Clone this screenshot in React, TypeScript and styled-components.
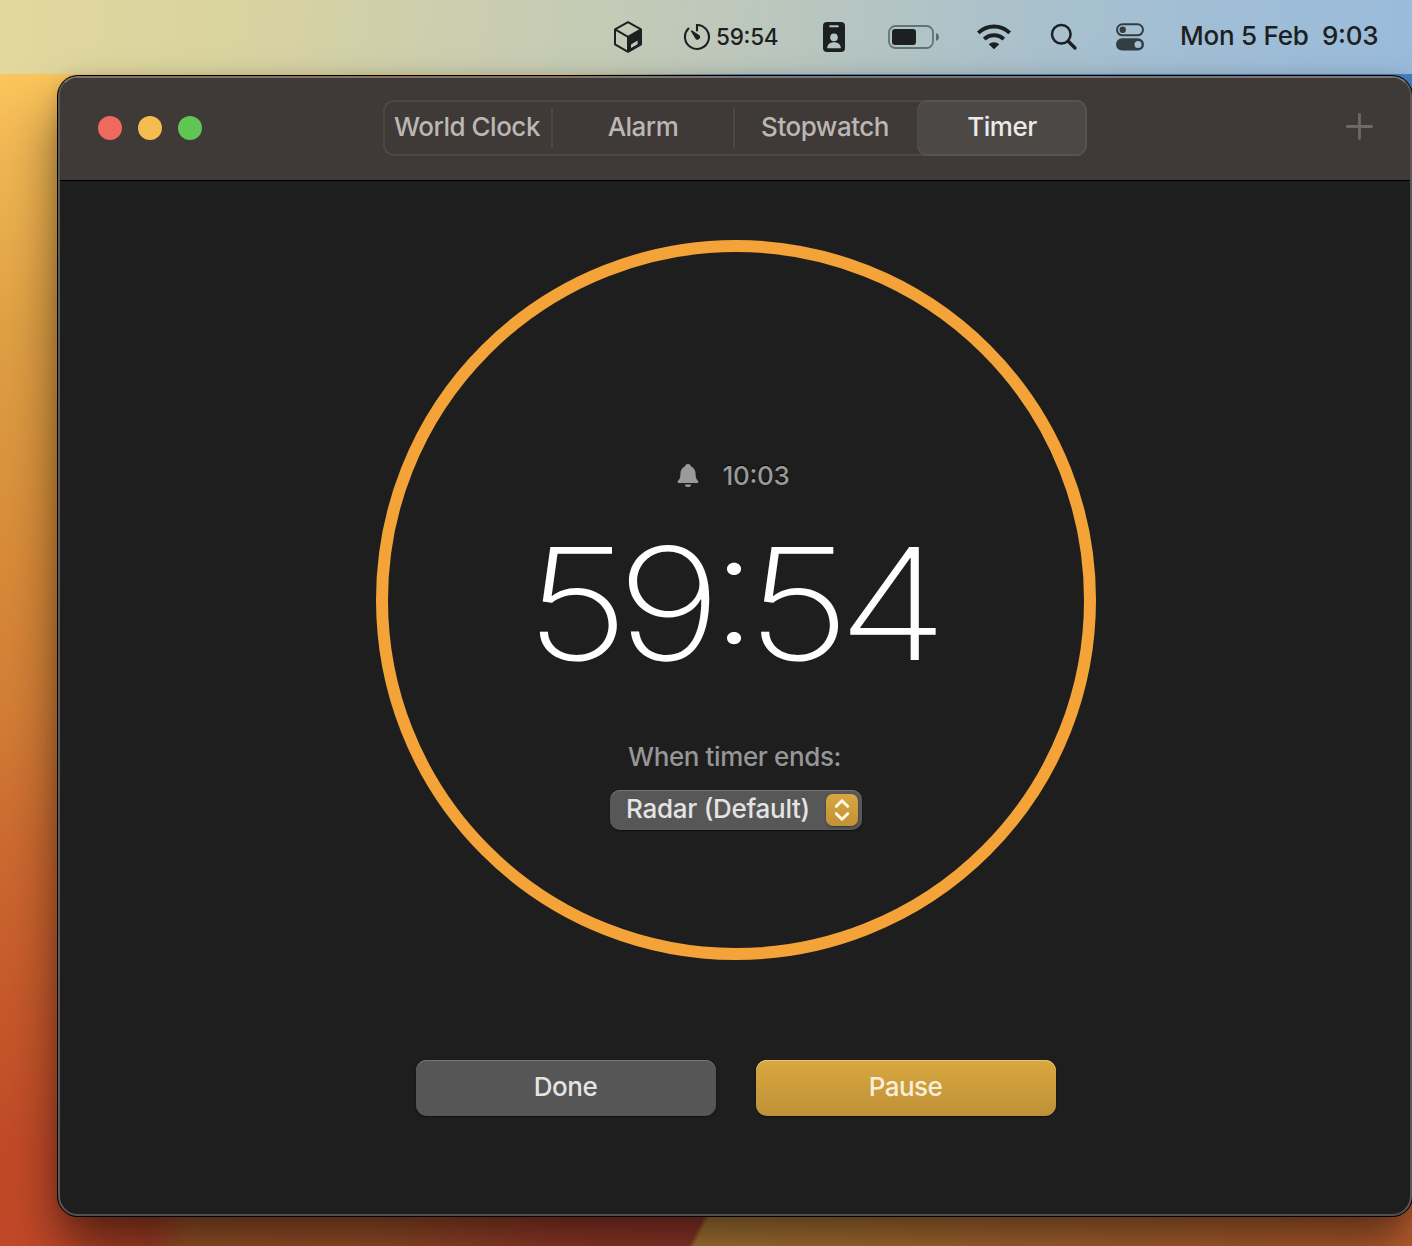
import React from 'react';
import styled, { createGlobalStyle } from 'styled-components';

const Global = createGlobalStyle`
  *, *::before, *::after { box-sizing: border-box; }
  body { margin: 0; overflow: hidden; font-family: Inter, 'Liberation Sans', sans-serif; font-feature-settings: 'calt' 1; }
  button { font: inherit; font-feature-settings: inherit; border: 0; margin: 0; padding: 0; }
  svg { display: block; flex: none; }
`;

const Desktop = styled.main`
  width: 1412px;
  height: 1246px;
  display: flex;
  flex-direction: column;
  overflow: hidden;
  background:
    linear-gradient(90deg, transparent, #4583c6 180px) 100% 0 / 850px 90px no-repeat,
    linear-gradient(117deg, transparent 0 49.85%, #b98339 50.25%, #bd7235 72%, #c4622f 100%) 0 100% / 1412px 60px no-repeat,
    linear-gradient(90deg, transparent 60px, #b04327 150px, #a95a2c 190px, #a9552b 380px, #a13e2b 560px, #9b3b2c 720px) 0 100% / 1412px 60px no-repeat,
    linear-gradient(180deg, #fcc65c 74px, #f0b552 160px, #dfa044 330px, #d88b39 560px, #d37f36 700px, #cc6930 850px, #c6592b 1000px, #c14a28 1150px, #c14828 1246px);
`;

const MenuBar = styled.header`
  height: 74px;
  flex: none;
  display: flex;
  align-items: center;
  padding-left: 613px;
  color: #1c2021;
  background: linear-gradient(93deg, #e1d89d 0%, #d9d3a0 17%, #cacdb0 34%, #bcc7bd 54%, #acc2ca 70%, #a1bed5 84%, #9abbdb 100%);
`;

const MenuItem = styled.div<{ $w: number }>`
  width: ${p => p.$w}px;
  flex: none;
  display: flex;
  align-items: center;
`;

const MenuText = styled.span<{ $size: number; $track: number; $lift?: number }>`
  font-size: ${p => p.$size}px;
  letter-spacing: ${p => p.$track}px;
  line-height: 32px;
  padding-bottom: ${p => p.$lift ?? 0}px;
  font-weight: 450;
  white-space: pre;
`;

const Window = styled.section`
  margin: 2px 0 0 58px;
  height: 1140px;
  width: 1354px;
  flex: none;
  display: flex;
  flex-direction: column;
  border: 2px solid #505050;
  border-color: #797570 #5a5958 #505050 #5a5958;
  border-radius: 20px;
  background: #1e1e1e;
  box-shadow: 0 0 0 1px #000, 0 30px 50px rgba(0, 0, 0, 0.52), 0 0 14px rgba(0, 0, 0, 0.12);
`;

const TitleBar = styled.div`
  height: 103px;
  flex: none;
  display: flex;
  align-items: flex-start;
  border-bottom: 1px solid #000;
  border-radius: 18px 18px 0 0;
  background: #3f3a37;
`;

const Lights = styled.div`
  display: flex;
  gap: 16px;
  width: 323px;
  padding: 38px 0 0 38px;
`;

const Light = styled.span<{ $color: string }>`
  width: 24px;
  height: 24px;
  border-radius: 50%;
  background: ${p => p.$color};
`;

const Tabs = styled.nav`
  width: 704px;
  height: 56px;
  margin-top: 22px;
  display: flex;
  align-items: center;
  border-radius: 11px;
  box-shadow: inset 0 0 0 2px #4c4845;
`;

const Tab = styled.button<{ $w: number; $divided?: boolean; $active?: boolean }>`
  width: ${p => p.$w}px;
  height: ${p => (p.$active ? 56 : 40)}px;
  flex: none;
  padding-bottom: 2px;
  font-size: 26px;
  font-weight: ${p => (p.$active ? 500 : 450)};
  letter-spacing: -0.5px;
  line-height: 32px;
  white-space: nowrap;
  color: ${p => (p.$active ? '#eceae9' : '#bbb7b4')};
  background: ${p => (p.$active ? '#4c4845' : 'transparent')};
  border-right: ${p => (p.$active ? '0' : p.$divided ? '2px solid #4c4845' : '2px solid transparent')};
  border-radius: ${p => (p.$active ? '11px' : '0')};
  box-shadow: ${p => (p.$active ? 'inset -2px 0 0 #575350, inset 0 2px 0 #575350, inset 0 -2px 0 #575350' : 'none')};
`;

const AddButton = styled.button`
  margin: 34px 0 0 258px;
  color: #6d6967;
  background: none;
`;

const Body = styled.div`
  flex: 1;
  padding: 59px 0 0 2px;
  display: flex;
  flex-direction: column;
  align-items: center;
`;

const Ring = styled.div`
  width: 720px;
  height: 720px;
  flex: none;
  border: 12px solid #f4a339;
  border-radius: 50%;
  display: flex;
  flex-direction: column;
  align-items: center;
`;

const EndTime = styled.div`
  display: flex;
  align-items: center;
  gap: 24px;
  height: 32px;
  margin: 208px 0 0 -6px;
  font-size: 26px;
  font-weight: 450;
  letter-spacing: -0.35px;
  color: #9a9a9a;
  text-shadow: 0 -1px 1px #000;
`;

const EndTimeText = styled.span`
  padding-bottom: 2px;
`;

const Remaining = styled.div`
  margin: 12px 0 0 -11px;
  height: 200px;
  line-height: 200px;
  font-size: 156px;
  font-weight: 250;
  font-optical-sizing: none;
  font-variation-settings: 'opsz' 14;
  font-feature-settings: 'calt' 1, 'case' 1;
  letter-spacing: -10.6px;
  transform: scaleX(1.15);
  white-space: nowrap;
  color: #fff;
`;

const Label = styled.div`
  margin: 37px 0 0 -3px;
  height: 32px;
  line-height: 32px;
  font-size: 26px;
  font-weight: 450;
  letter-spacing: -0.38px;
  color: #969696;
`;

const Select = styled.button`
  margin-top: 17px;
  width: 252px;
  height: 40px;
  padding: 0 4px 0 16px;
  display: flex;
  align-items: center;
  justify-content: space-between;
  border-radius: 10px;
  font-size: 26px;
  font-weight: 450;
  line-height: 32px;
  white-space: nowrap;
  color: #e4e4e4;
  background: #575757;
  box-shadow: inset 0 1px 0 #757575, 0 1px 2px rgba(0, 0, 0, 0.5);
`;

const SelectText = styled.span`
  margin-top: -2px;
  letter-spacing: -0.28px;
`;

const Stepper = styled.span`
  width: 32px;
  height: 32px;
  display: grid;
  place-items: center;
  border-radius: 7px;
  background: linear-gradient(#d9a741, #c09236);
  box-shadow: 0 1px 2px rgba(0, 0, 0, 0.4);
`;

const Actions = styled.div`
  display: flex;
  gap: 40px;
  margin-top: 100px;
`;

const Action = styled.button<{ $primary?: boolean }>`
  width: 300px;
  height: 56px;
  padding: 0 1px 3px 0;
  border-radius: 11px;
  font-size: 26px;
  font-weight: 450;
  letter-spacing: -0.5px;
  color: ${p => (p.$primary ? '#f8eedb' : '#e4e4e4')};
  background: ${p => (p.$primary ? 'linear-gradient(#daa840, #be9137)' : '#565656')};
  box-shadow: inset 0 1px 0 ${p => (p.$primary ? '#e9c576' : '#777')}, 0 1px 2px rgba(0, 0, 0, 0.5);
`;

const CubeIcon = () => (
  <svg width="30" height="34" viewBox="0 0 30 34" fill="none">
    <path d="M15 2.2 28 9.3v15L15 31.8 2 24.3v-15z" stroke="currentColor" strokeWidth="2" strokeLinejoin="round" />
    <path d="M2 9.3 15 16.8 28 9.3M15 16.8v15" stroke="currentColor" strokeWidth="2" />
    <path fillRule="evenodd" d="M15 16.8 28 9.3v15L15 31.8zM18 24.4v3.6l6.6-3.8v-3.6z" fill="currentColor" />
  </svg>
);

const TimerIcon = () => (
  <svg width="28" height="28" viewBox="0 0 28 28" fill="none" stroke="currentColor" strokeLinecap="round">
    <path d="M14 7.5V2a12 12 0 1 1-8.6 3.6" strokeWidth="2.1" />
    <path d="M8.7 8.1 16 12.9a2 2 0 0 1-2.5 2.9z" fill="currentColor" strokeWidth="1.6" strokeLinejoin="round" />
  </svg>
);

const BadgeIcon = () => (
  <svg width="22" height="30" viewBox="0 0 22 30">
    <rect width="22" height="30" rx="4" fill="currentColor" />
    <g fill="#b7c5c2">
      <rect x="6.2" y="3.2" width="9.6" height="2" rx="1" />
      <circle cx="11" cy="15.4" r="3.8" />
      <path d="M4.2 26.2c0-4 3-6 6.8-6s6.8 2 6.8 6z" />
    </g>
  </svg>
);

const BatteryIcon = () => (
  <svg width="52" height="24" viewBox="0 0 52 24">
    <rect x="1" y="1" width="44" height="22" rx="6.5" fill="none" stroke="#1c2021" strokeOpacity=".5" strokeWidth="1.8" />
    <rect x="4" y="4" width="24" height="16" rx="3" fill="currentColor" />
    <path d="M48 8v8c1.8-.7 3-2.2 3-4s-1.2-3.3-3-4z" fill="#1c2021" fillOpacity=".55" />
  </svg>
);

const WifiIcon = () => (
  <svg width="36" height="26" viewBox="0 0 36 26" fill="none" stroke="currentColor">
    <path d="M2.3 8.9a22.6 22.6 0 0 1 31.4 0" strokeWidth="3.9" />
    <path d="M8.2 15.1a14.2 14.2 0 0 1 19.6 0" strokeWidth="3.9" />
    <path d="M18 25.2 12.7 20.3c3-2.9 7.6-2.9 10.6 0z" fill="currentColor" stroke="none" />
  </svg>
);

const SearchIcon = () => (
  <svg width="28" height="28" viewBox="0 0 28 28" fill="none" stroke="currentColor" strokeLinecap="round">
    <circle cx="11.3" cy="11.3" r="9.3" strokeWidth="2.5" />
    <path d="m18.5 18.5 6.5 6.5" strokeWidth="3.3" />
  </svg>
);

const ControlIcon = () => (
  <svg width="30" height="28" viewBox="0 0 30 28" color="#333d42">
    <rect x="2" y="1.3" width="26" height="11" rx="5.5" fill="none" stroke="currentColor" strokeWidth="2" />
    <circle cx="7.7" cy="6.8" r="3.2" fill="currentColor" />
    <rect x="1" y="15.3" width="28" height="12.2" rx="6.1" fill="currentColor" />
    <circle cx="23" cy="21.4" r="3.5" fill="#a6c0d0" />
  </svg>
);

const BellIcon = () => (
  <svg width="22" height="26" viewBox="0 0 22 26" fill="currentColor">
    <path d="M11 1c1.500 0 2.600.9 2.900 2.300 3 1.300 4.600 4 4.700 7.500.1 4 .5 5.200 2.500 7.300.8.9.3 2-.8 2H1.700c-1.100 0-1.600-1.100-.8-2 2-2.100 2.400-3.300 2.500-7.300.1-3.500 1.700-6.200 4.700-7.500C8.400 1.900 9.500 1 11 1z" />
    <path d="M7.600 21.500h6.800c-.5 1.700-1.700 2.600-3.400 2.600s-2.900-.9-3.400-2.600z" />
  </svg>
);

const PlusIcon = () => (
  <svg width="29" height="29" viewBox="0 0 29 29" stroke="currentColor" strokeWidth="2.8" strokeLinecap="round">
    <path d="M14.5 2.4v24.200M2.400 14.500h24.200" />
  </svg>
);

const ChevronsIcon = () => (
  <svg width="20" height="26" viewBox="0 0 20 26" fill="none" stroke="#fff6e3" strokeWidth="3" strokeLinecap="round" strokeLinejoin="round">
    <path d="m4.300 9.300 5.700-5.600 5.700 5.600M4.300 16.700l5.700 5.600 5.700-5.600" />
  </svg>
);

export default function App() {
  return (
    <>
      <Global />
      <Desktop>
        <MenuBar>
          <MenuItem $w={70}><CubeIcon /></MenuItem>
          <MenuItem $w={33}><TimerIcon /></MenuItem>
          <MenuItem $w={107}><MenuText $size={22.5} $track={-0.25}>59:54</MenuText></MenuItem>
          <MenuItem $w={65}><BadgeIcon /></MenuItem>
          <MenuItem $w={88}><BatteryIcon /></MenuItem>
          <MenuItem $w={74}><WifiIcon /></MenuItem>
          <MenuItem $w={65}><SearchIcon /></MenuItem>
          <MenuItem $w={65}><ControlIcon /></MenuItem>
          <MenuItem $w={232}><MenuText $size={26} $track={-0.24} $lift={2}>{'Mon 5 Feb  9:03'}</MenuText></MenuItem>
        </MenuBar>
        <Window>
          <TitleBar>
            <Lights>
              <Light $color="#ee6a5f" />
              <Light $color="#f5bd4f" />
              <Light $color="#61c554" />
            </Lights>
            <Tabs>
              <Tab $w={170} $divided>World Clock</Tab>
              <Tab $w={182} $divided>Alarm</Tab>
              <Tab $w={182}>Stopwatch</Tab>
              <Tab $w={170} $active>Timer</Tab>
            </Tabs>
            <AddButton aria-label="Add timer"><PlusIcon /></AddButton>
          </TitleBar>
          <Body>
            <Ring>
              <EndTime><BellIcon /><EndTimeText>10:03</EndTimeText></EndTime>
              <Remaining>59:54</Remaining>
              <Label>When timer ends:</Label>
              <Select>
                <SelectText>Radar (Default)</SelectText>
                <Stepper><ChevronsIcon /></Stepper>
              </Select>
            </Ring>
            <Actions>
              <Action>Done</Action>
              <Action $primary>Pause</Action>
            </Actions>
          </Body>
        </Window>
      </Desktop>
    </>
  );
}
